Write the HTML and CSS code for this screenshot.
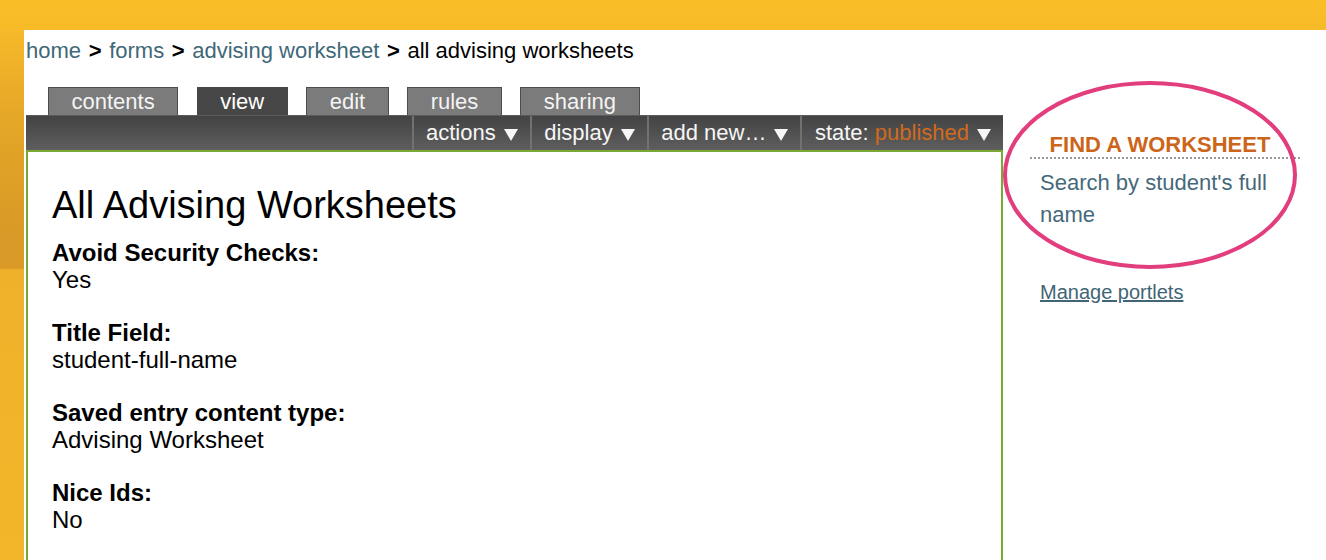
FILE: index.html
```html
<!DOCTYPE html>
<html>
<head>
<meta charset="utf-8">
<link rel="stylesheet" href="styles.css">
</head>
<body>
<div class="topband"></div>
<div class="page">
  <div class="strip"></div>
  <div class="main">
    <div class="breadcrumb">
      <a href="#">home</a> <span class="sep">&gt;</span> <a href="#">forms</a> <span class="sep">&gt;</span> <a href="#">advising worksheet</a> <span class="sep">&gt;</span> <span class="current">all advising worksheets</span>
    </div>
    <div class="columns">
      <div class="content-col">
        <div class="tabs">
          <span class="tab">contents</span>
          <span class="tab active">view</span>
          <span class="tab">edit</span>
          <span class="tab">rules</span>
          <span class="tab">sharing</span>
        </div>
        <div class="bar">
          <span class="menu">actions<span class="caret"></span></span>
          <span class="menu">display<span class="caret"></span></span>
          <span class="menu">add new…<span class="caret"></span></span>
          <span class="menu">state: <span class="state">published</span><span class="caret"></span></span>
        </div>
        <div class="box">
          <h1 class="title">All Advising Worksheets</h1>
          <div class="field"><div class="label">Avoid Security Checks:</div><div class="value">Yes</div></div>
          <div class="field"><div class="label">Title Field:</div><div class="value">student-full-name</div></div>
          <div class="field"><div class="label">Saved entry content type:</div><div class="value">Advising Worksheet</div></div>
          <div class="field"><div class="label">Nice Ids:</div><div class="value">No</div></div>
        </div>
      </div>
      <div class="sidebar">
        <div class="portlet">
          <div class="portlet-header">FIND A WORKSHEET</div>
          <div class="portlet-body">Search by student's full name</div>
        </div>
        <a class="manage" href="#">Manage portlets</a>
        <svg class="circle" width="300" height="194" viewBox="0 0 300 194">
          <ellipse cx="148" cy="96" rx="145" ry="92" fill="none" stroke="#e23d7c" stroke-width="4"/>
        </svg>
      </div>
    </div>
  </div>
</div>
</body>
</html>
```

FILE: styles.css
```css
html, body {
  margin: 0;
  padding: 0;
}
body {
  width: 1326px;
  height: 560px;
  overflow: hidden;
  background: #f8bd28;
  font-family: "Liberation Sans", Arial, sans-serif;
  color: #000;
}
.topband {
  height: 30px;
  background: linear-gradient(#f9be27, #f7ba28);
}
.page {
  display: flex;
  height: 530px;
}
.strip {
  width: 24px;
  flex: none;
  background: linear-gradient(#f6b92a 0px, #e6a827 80px, #d89a26 200px, #d99a27 238px, #efb12a 240px, #f3b62a 530px);
}
.main {
  flex: 1;
  background: #fff;
  display: flex;
  flex-direction: column;
  overflow: hidden;
}
.breadcrumb {
  flex: none;
  font-size: 22px;
  line-height: 26px;
  padding: 8px 0 0 2px;
  height: 49px;
  box-sizing: border-box;
  white-space: nowrap;
}
.breadcrumb a {
  color: #3f6878;
  text-decoration: none;
}
.breadcrumb .sep, .breadcrumb .current {
  color: #000;
}
.breadcrumb .sep {
  font-weight: bold;
  margin: 0 1.5px;
}
.columns {
  flex: none;
  display: flex;
  padding-top: 8px;
  position: relative;
}
.content-col {
  width: 977px;
  margin-left: 2px;
  flex: none;
}
.tabs {
  display: flex;
  gap: 18.5px;
  padding-left: 22px;
  height: 28px;
}
.tab {
  display: block;
  box-sizing: border-box;
  height: 28px;
  padding: 0 22.5px;
  background: #7b7b7b;
  border: 1px solid #4d4d4d;
  border-bottom: none;
  color: #f4f4f4;
  font-size: 22px;
  line-height: 27px;
}
.tab.active {
  background: #474747;
  border-color: #474747;
  color: #fff;
}
.bar {
  height: 35px;
  background: linear-gradient(#434345, #5e5e5e);
  display: flex;
  justify-content: flex-end;
  box-sizing: border-box;
  border-top: 1px solid #5a5a5a;
}
.menu {
  display: block;
  padding: 0 12px 0 12.5px;
  border-left: 2px solid #717171;
  color: #f6f6f6;
  font-size: 22px;
  line-height: 33px;
  white-space: nowrap;
}
.caret {
  display: inline-block;
  width: 0;
  height: 0;
  margin-left: 8px;
  border-left: 7px solid transparent;
  border-right: 7px solid transparent;
  border-top: 12px solid #f6f6f6;
  vertical-align: -1px;
}
.state {
  color: #d06a1c;
}
.box {
  border: 2px solid #79a934;
  border-bottom: none;
  height: 420px;
  padding: 31px 0 0 24px;
  box-sizing: border-box;
}
.title {
  margin: 0 0 12px;
  font-weight: normal;
  font-size: 38px;
  line-height: 44px;
}
.field {
  margin-bottom: 26px;
  font-size: 24px;
  line-height: 27px;
}
.label {
  font-weight: bold;
}
.sidebar {
  flex: 1;
  padding: 0 0 0 37px;
}
.portlet {
  margin-top: 46px;
  width: 262px;
}
.portlet-header {
  color: #cc651a;
  font-weight: bold;
  font-size: 22px;
  line-height: 24px;
  text-align: center;
  padding: 0 10px 0 0;
  margin-left: -10px;
  width: 260px;
  border-bottom: 2px dotted #9a9a9a;
}
.portlet-body {
  color: #45697a;
  font-size: 22px;
  line-height: 32px;
  padding: 8px 0 0 0;
}
.manage {
  display: block;
  margin-top: 50px;
  color: #3f6576;
  font-size: 20px;
  line-height: 22px;
}
.circle {
  position: absolute;
  left: 978px;
  top: 0px;
}
```
